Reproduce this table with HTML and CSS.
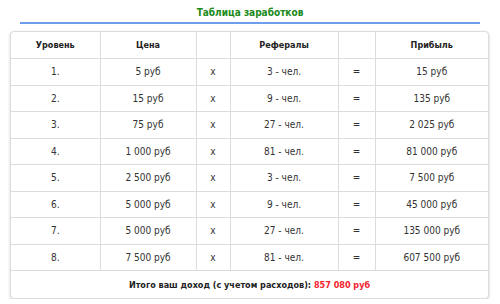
FILE: index.html
```html
<!DOCTYPE html>
<html>
<head>
<meta charset="utf-8">
<link rel="stylesheet" href="styles.css">
</head>
<body>
<div class="title">Таблица заработков</div>
<div class="card">
<table class="earn">
<colgroup><col class="c1"><col class="c2"><col class="c3"><col class="c4"><col class="c5"><col class="c6"></colgroup>
<thead>
<tr><th>Уровень</th><th>Цена</th><th></th><th>Рефералы</th><th></th><th>Прибыль</th></tr>
</thead>
<tbody>
<tr><td>1.</td><td>5 руб</td><td>x</td><td>3 - чел.</td><td class="eq">=</td><td>15 руб</td></tr>
<tr><td>2.</td><td>15 руб</td><td>x</td><td>9 - чел.</td><td class="eq">=</td><td>135 руб</td></tr>
<tr><td>3.</td><td>75 руб</td><td>x</td><td>27 - чел.</td><td class="eq">=</td><td>2 025 руб</td></tr>
<tr><td>4.</td><td>1 000 руб</td><td>x</td><td>81 - чел.</td><td class="eq">=</td><td>81 000 руб</td></tr>
<tr><td>5.</td><td>2 500 руб</td><td>x</td><td>3 - чел.</td><td class="eq">=</td><td>7 500 руб</td></tr>
<tr><td>6.</td><td>5 000 руб</td><td>x</td><td>9 - чел.</td><td class="eq">=</td><td>45 000 руб</td></tr>
<tr><td>7.</td><td>5 000 руб</td><td>x</td><td>27 - чел.</td><td class="eq">=</td><td>135 000 руб</td></tr>
<tr><td>8.</td><td>7 500 руб</td><td>x</td><td>81 - чел.</td><td class="eq">=</td><td>607 500 руб</td></tr>
</tbody>
<tfoot>
<tr><td colspan="6" class="total">Итого ваш доход (с учетом расходов): <span class="sum">857 080 руб</span></td></tr>
</tfoot>
</table>
</div>
</body>
</html>
```
FILE: styles.css
```css
html, body { margin: 0; padding: 0; background: #fff; }
body { font-family: "DejaVu Sans Condensed", "DejaVu Sans", sans-serif; font-size: 10px; color: #333; }
.title {
  margin: 0 20px;
  height: 22px;
  line-height: 26px;
  text-align: center;
  font-weight: bold;
  color: #1b8a1b;
  border-bottom: 2px solid #6d9eeb;
}
.card {
  margin: 7px 11px 0 10px;
  border: 1px solid #dcdcdc;
  border-radius: 4px;
  box-shadow: 0 1px 3px rgba(0,0,0,0.18);
  background: #fff;
  overflow: hidden;
}
.earn { width: 100%; border-collapse: collapse; table-layout: fixed; }
.c1 { width: 89px; } .c2 { width: 96px; } .c3 { width: 34px; } .c4 { width: 108px; } .c5 { width: 37px; } .c6 { width: auto; }
.earn th, .earn td {
  border: 1px solid #dcdcdc;
  text-align: center;
  padding: 0;
  font-weight: normal;
}
.earn tr > *:first-child { border-left: 0; }
.earn tr > *:last-child { border-right: 0; }
.earn thead th { border-top: 0; font-weight: bold; font-size: 9px; height: 26px; color: #222; }
.earn tbody td { height: 25.5px; }
.eq { font-weight: bold; }
.total { border-bottom: 0 !important; height: 27px; font-weight: bold !important; font-size: 9px; color: #222; }
.sum { color: #f5222d; }
```
